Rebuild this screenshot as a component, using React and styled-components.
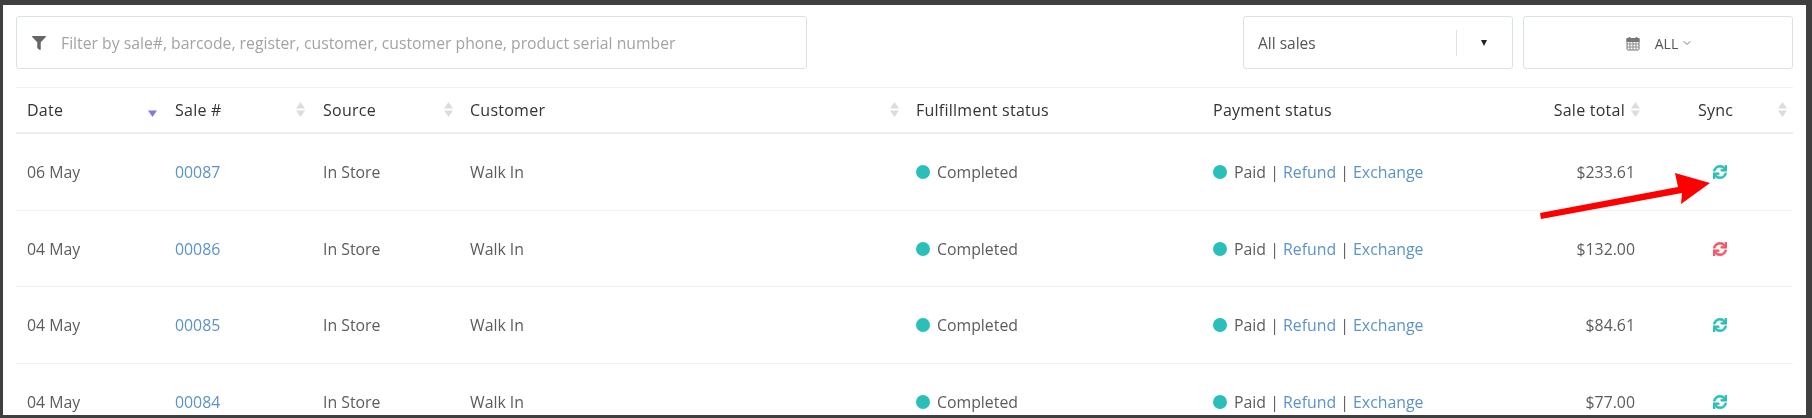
import React from "react";
import styled, { createGlobalStyle } from "styled-components";
import { FaFilter, FaSync } from "react-icons/fa";
import { LuChevronDown } from "react-icons/lu";

const Global = createGlobalStyle`
  html, body { margin: 0; padding: 0; height: 418px; overflow: hidden; background: #3f3f3f; }
  body { font-family: "Open Sans", "Liberation Sans", sans-serif; font-size: 16px; color: #5c5c5c; }
`;

const Frame = styled.div`
  position: relative;
  box-sizing: border-box;
  width: 1803px;
  height: 410px;
  margin: 5px 6px 3px 3px;
  padding: 11px 13px 0;
  background: #fff;
  overflow: hidden;
  filter: blur(0.35px);
`;

const Toolbar = styled.div`
  display: flex;
  height: 53px;
  gap: 10px;
`;

const Field = styled.div`
  box-sizing: border-box;
  display: flex;
  align-items: center;
  height: 53px;
  padding-top: 1px;
  border: 1px solid #d7e3e6;
  border-radius: 3px;
  background: #fff;
`;

const Search = styled(Field)`
  width: 791px;
  margin-right: 426px;
  padding-left: 15px;
  padding-right: 14px;
  color: #a3a3a3;
  font-size: 15.76px;
  svg { color: #666; font-size: 14px; margin-right: 15px; }
`;

const Select = styled(Field)`
  width: 270px;
  padding-left: 14px;
  color: #555;
  font-size: 15.5px;
`;

const SelectLabel = styled.span`
  flex: 1;
`;

const SelectDivider = styled.span`
  width: 1px;
  height: 26px;
  background: #dbe3e5;
`;

const SelectCaret = styled.span`
  width: 0;
  height: 0;
  margin: 0 25px 0 24px;
  border-left: 3.5px solid transparent;
  border-right: 3.5px solid transparent;
  border-top: 6px solid #222;
`;

const DateButton = styled(Field)`
  width: 270px;
  justify-content: center;
  padding-left: 3px;
  color: #555;
  font-size: 14px;
  svg:last-child { color: #777; margin-left: 3px; }
`;

const CalendarIcon = styled.svg`
  margin-right: 15px;
  color: #777;
`;

const Table = styled.div`
  margin-top: 18px;
  border-top: 1px solid #eef1f3;
`;

const columns = "148px 148px 147px 446px 297px 298px 187px 106px";

const HeaderRow = styled.div`
  display: grid;
  grid-template-columns: ${columns};
  height: 46px;
  box-sizing: border-box;
  border-bottom: 2px solid #e9eef1;
  color: #333;
  letter-spacing: 0.25px;
`;

const HeaderCell = styled.div`
  position: relative;
  display: flex;
  align-items: center;
  justify-content: ${(p) => (p.$right ? "flex-end" : "flex-start")};
  padding: 0 ${(p) => (p.$right ? "62px" : "11px")} 0 11px;
`;

const SortHolder = styled.span`
  position: absolute;
  right: ${(p) => p.$right}px;
  top: 13px;
  display: flex;
`;

const Row = styled.div`
  display: grid;
  grid-template-columns: ${columns};
  height: 76.7px;
  box-sizing: border-box;
  border-bottom: 1.5px solid #eff2f5;
  font-size: 15.85px;
`;

const Cell = styled.div`
  display: flex;
  align-items: center;
  justify-content: ${(p) => (p.$right ? "flex-end" : "flex-start")};
  padding: 0 ${(p) => (p.$right ? "52px" : "11px")} 0 11px;
  white-space: pre;
`;

const SyncCell = styled(Cell)`
  padding-left: 26px;
  font-size: 14px;
  color: ${(p) => (p.$failed ? "#ee5a6a" : "#2cbfb8")};
  svg { stroke: currentColor; stroke-width: 24; }
`;

const Link = styled.a`
  color: #5b93c9;
  text-decoration: none;
`;

const Dot = styled.span`
  width: 14px;
  height: 14px;
  margin-right: 7px;
  border-radius: 50%;
  background: #2bbfb9;
`;

const Arrow = styled.svg`
  position: absolute;
  left: 1537px;
  top: 168px;
`;

function Sort({ active }) {
  return (
    <svg width="11" height="17" viewBox="0 0 11 17">
      {!active && <path d="M5.5 1 L10 7.5 H1 Z" fill="#dcdcdc" />}
      <path d="M5.5 16 L10 9.5 H1 Z" fill={active ? "#7d7bdc" : "#dcdcdc"} />
    </svg>
  );
}

function Calendar() {
  return (
    <CalendarIcon width="14" height="15" viewBox="0 0 14 15" fill="none" stroke="currentColor">
      <rect x="1" y="2.5" width="12" height="11.5" rx="1" />
      <rect x="1" y="2.5" width="12" height="3" fill="currentColor" />
      <path d="M3.5 1v3M10.5 1v3" strokeWidth="1.6" />
      <path d="M1 8h12M1 11h12M4 5.5V14M7 5.5V14M10 5.5V14" strokeWidth="0.8" />
    </CalendarIcon>
  );
}

const rows = [
  ["06 May", "00087", "$233.61", false],
  ["04 May", "00086", "$132.00", true],
  ["04 May", "00085", "$84.61", false],
  ["04 May", "00084", "$77.00", false],
];

export default function App() {
  return (
    <>
      <Global />
      <Frame>
        <Toolbar>
          <Search>
            <FaFilter />
            Filter by sale#, barcode, register, customer, customer phone, product serial number
          </Search>
          <Select>
            <SelectLabel>All sales</SelectLabel>
            <SelectDivider />
            <SelectCaret />
          </Select>
          <DateButton>
            <Calendar />
            ALL
            <LuChevronDown size={12} />
          </DateButton>
        </Toolbar>
        <Table>
          <HeaderRow>
            <HeaderCell>Date<SortHolder $right={6}><Sort active /></SortHolder></HeaderCell>
            <HeaderCell>Sale #<SortHolder $right={6}><Sort /></SortHolder></HeaderCell>
            <HeaderCell>Source<SortHolder $right={5}><Sort /></SortHolder></HeaderCell>
            <HeaderCell>Customer<SortHolder $right={5}><Sort /></SortHolder></HeaderCell>
            <HeaderCell>Fulfillment status</HeaderCell>
            <HeaderCell>Payment status</HeaderCell>
            <HeaderCell $right>Sale total<SortHolder $right={46}><Sort /></SortHolder></HeaderCell>
            <HeaderCell>Sync<SortHolder $right={5}><Sort /></SortHolder></HeaderCell>
          </HeaderRow>
          {rows.map(([date, id, total, failed]) => (
            <Row key={id}>
              <Cell>{date}</Cell>
              <Cell><Link href="#">{id}</Link></Cell>
              <Cell>In Store</Cell>
              <Cell>Walk In</Cell>
              <Cell><Dot />Completed</Cell>
              <Cell><Dot />Paid | <Link href="#">Refund</Link> | <Link href="#">Exchange</Link></Cell>
              <Cell $right>{total}</Cell>
              <SyncCell $failed={failed}><FaSync /></SyncCell>
            </Row>
          ))}
        </Table>
        <Arrow width="175" height="50" viewBox="0 0 175 50">
          <path d="M0 40 L138 14 L135 0 L170 10 L141 31 L142 20 L1 46 Z" fill="#fe0000" />
        </Arrow>
      </Frame>
    </>
  );
}
